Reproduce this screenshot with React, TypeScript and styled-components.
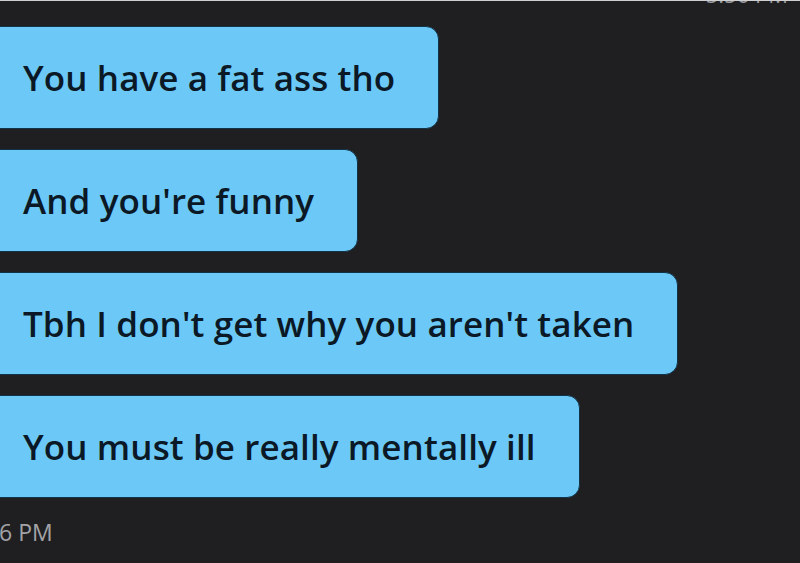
import React from "react";
import styled, { createGlobalStyle } from "styled-components";

const GlobalStyle = createGlobalStyle`
  html, body {
    margin: 0;
    padding: 0;
    background: #1f1f21;
    overflow: hidden;
  }
`;

const Screen = styled.div`
  width: 800px;
  height: 563px;
  background: #1f1f21;
  border-top: 1px solid #cfcfd1;
  box-sizing: border-box;
  overflow: hidden;
  font-family: "Open Sans", "Liberation Sans", sans-serif;
`;

// bottom edge of the previous timestamp, scrolled mostly out of view
const TopStamp = styled.div`
  height: 4px;
  overflow: hidden;
  display: flex;
  justify-content: flex-end;
  align-items: flex-end;
  padding-right: 12px;
  color: #9a9a9e;
  font-size: 22px;
  line-height: 22px;
`;

const Thread = styled.div`
  display: flex;
  flex-direction: column;
  align-items: flex-start;
  gap: 20px;
  padding-top: 21px;
`;

const Bubble = styled.div`
  box-sizing: border-box;
  height: 103px;
  margin-left: -20px;
  padding: 0 43px 0 42px;
  display: flex;
  align-items: center;
  background: #6cc9f7;
  border: 1px solid #123347;
  border-radius: 13px;
  color: #0b1826;
  font-size: 35px;
  font-weight: 600;
  letter-spacing: 0.1px;
  white-space: nowrap;
`;

const Time = styled.div`
  margin-top: 18px;
  margin-left: -1px;
  color: #a3a3a7;
  font-size: 23px;
  line-height: 32px;
`;

const messages = [
  "You have a fat ass tho",
  "And you're funny",
  "Tbh I don't get why you aren't taken",
  "You must be really mentally ill",
];

const App = () => (
  <>
    <GlobalStyle />
    <Screen>
      <TopStamp>5:56 PM</TopStamp>
      <Thread>
        {messages.map((m) => (
          <Bubble key={m}>{m}</Bubble>
        ))}
      </Thread>
      <Time>6 PM</Time>
    </Screen>
  </>
);

export default App;
